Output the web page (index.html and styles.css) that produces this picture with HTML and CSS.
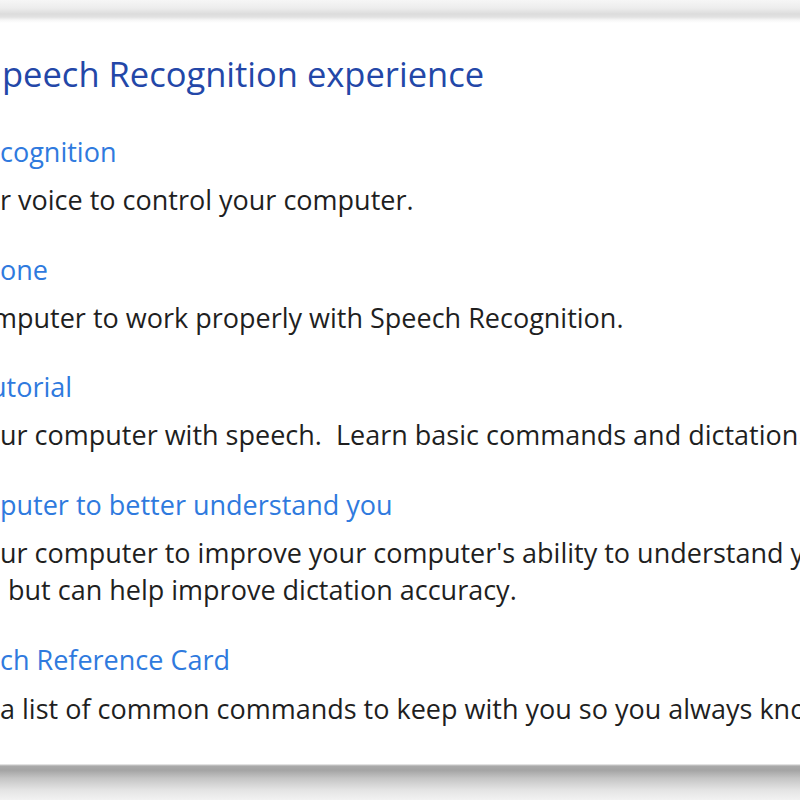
FILE: index.html
```html
<!DOCTYPE html>
<html lang="en">
<head>
<meta charset="utf-8">
<title>Speech Recognition</title>
<link rel="stylesheet" href="styles.css">
</head>
<body>
<div class="frame">
  <div class="top-edge"></div>
  <div class="panel">
    <h1 class="title">peech Recognition experience</h1>
    <div class="task">
      <a class="link">cognition</a>
      <p class="desc">r voice to control your computer.</p>
    </div>
    <div class="task">
      <a class="link">one</a>
      <p class="desc cut-m">mputer to work properly with Speech Recognition.</p>
    </div>
    <div class="task">
      <a class="link cut-u">utorial</a>
      <p class="desc">ur computer with speech.&nbsp; Learn basic commands and dictation.</p>
    </div>
    <div class="task">
      <a class="link">puter to better understand you</a>
      <p class="desc">ur computer to improve your computer's ability to understand your voice.</p>
      <p class="desc indent">but can help improve dictation accuracy.</p>
    </div>
    <div class="task last">
      <a class="link">ch Reference Card</a>
      <p class="desc">a list of common commands to keep with you so you always know what to say.</p>
    </div>
  </div>
  <div class="bottom-edge"></div>
</div>
</body>
</html>
```
FILE: styles.css
```css
html, body {
  margin: 0;
  padding: 0;
  background: #ffffff;
}
.frame {
  width: 800px;
  height: 800px;
  overflow: hidden;
  display: flex;
  flex-direction: column;
  font-family: "Open Sans", "Noto Sans", sans-serif;
}
.top-edge {
  height: 23px;
  flex: none;
  background: linear-gradient(to bottom, #f6f6f6 0px, #ededed 8px, #dcdcdc 14px, #e2e2e2 17px, #f6f6f6 20px, #ffffff 23px);
}
.panel {
  flex: 1;
  background: #ffffff;
  padding-top: 31px;
  overflow: hidden;
  white-space: nowrap;
}
.bottom-edge {
  height: 36px;
  flex: none;
  background: linear-gradient(to bottom, #f4f4f4 0px, #a9a9a9 2px, #a3a3a3 6px, #c4c4c4 14px, #e4e4e4 26px, #f2f2f2 36px);
}
.title {
  margin: 0 0 39px 2px;
  font-size: 34.5px;
  line-height: 40px;
  font-weight: 500;
  color: #2347a8;
}
.task {
  display: flex;
  flex-direction: column;
  margin-bottom: 32.5px;
}
.task.last .link {
  margin-top: 1px;
  margin-bottom: 12px;
}
.link {
  display: block;
  font-size: 27px;
  line-height: 37px;
  font-weight: 500;
  color: #2f7ade;
  margin-bottom: 11px;
}
.desc {
  margin: 0;
  font-size: 27px;
  line-height: 37px;
  font-weight: 500;
  color: #1f1f1f;
}
.indent {
  margin-left: 8px;
}
.cut-m {
  margin-left: -8px;
}
.cut-u {
  margin-left: -10px;
}
```
